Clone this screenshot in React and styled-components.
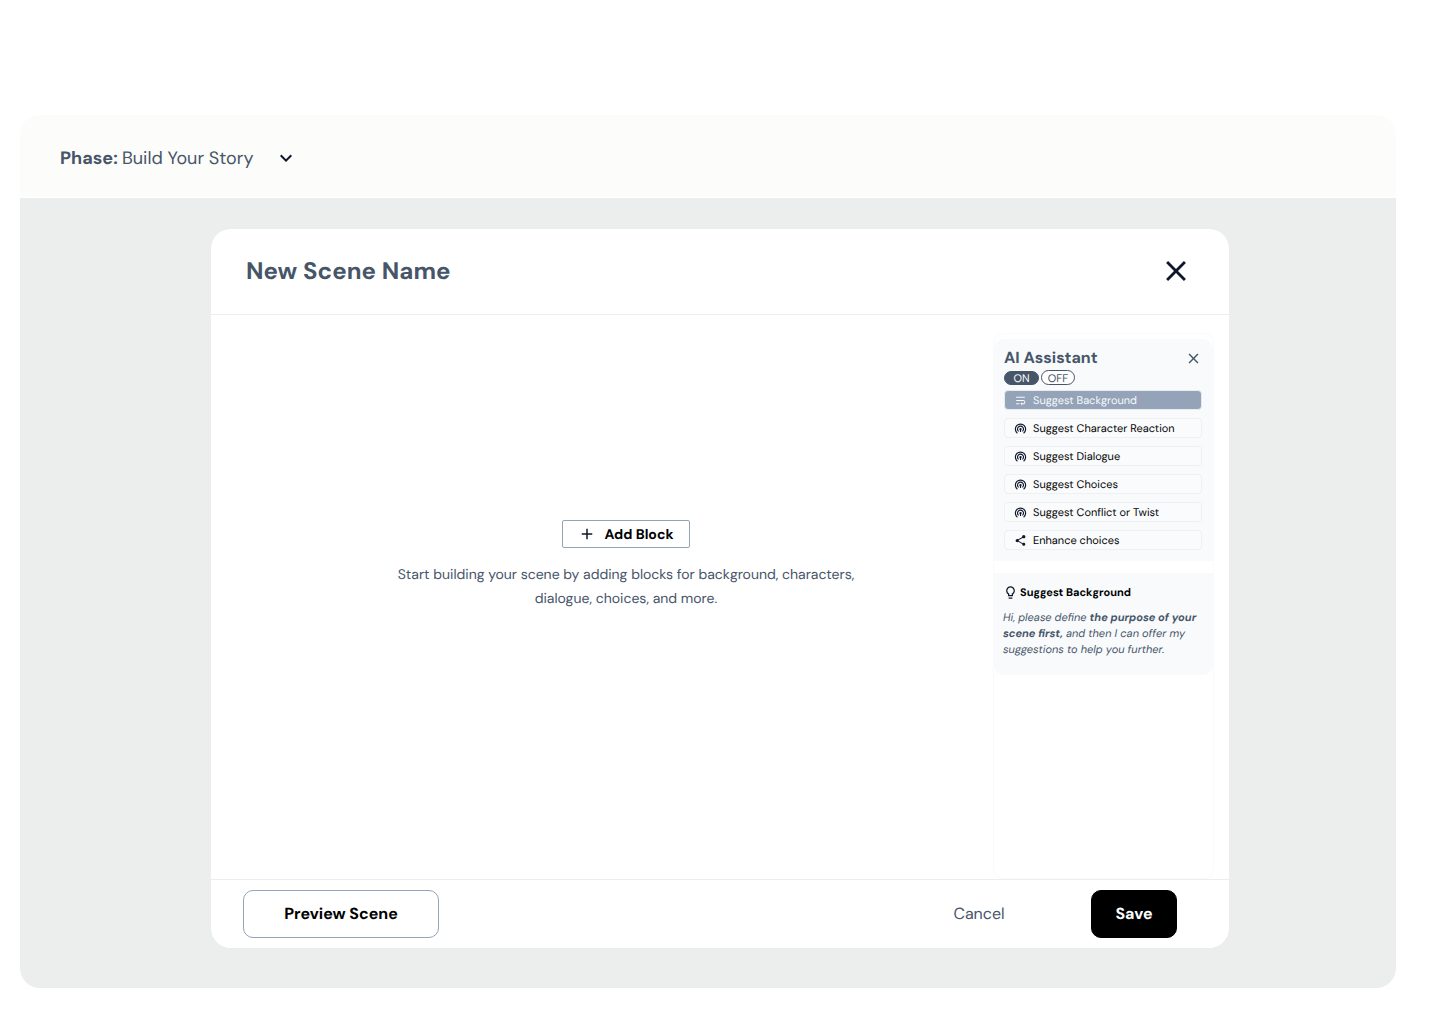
import React from "react";
import styled, { createGlobalStyle } from "styled-components";
import {
  MdAdd,
  MdClose,
  MdExpandMore,
  MdOutlineLightbulb,
  MdShare,
  MdWrapText,
} from "react-icons/md";

const GlobalStyle = createGlobalStyle`
  *, *::before, *::after { box-sizing: border-box; }
  body {
    margin: 0;
    background: #ffffff;
    font-family: "DM Sans", Inter, "Liberation Sans", sans-serif;
    color: #475569;
    text-rendering: geometricPrecision;
  }
  button { font-family: inherit; margin: 0; padding: 0; cursor: pointer; text-rendering: inherit; }
  h1, h2, h3, p { margin: 0; }
  svg { display: block; flex: none; }
`;

const Page = styled.main`
  width: 1440px;
  height: 1024px;
  padding: 115px 44px 36px 20px;
  overflow: hidden;
`;

const Workspace = styled.div`
  display: flex;
  flex-direction: column;
  height: 873px;
  border-radius: 20px;
  overflow: hidden;
`;

const PhaseBar = styled.header`
  display: flex;
  align-items: center;
  height: 83px;
  padding: 3px 40px 0;
  background: #fcfcfa;
  border-bottom: 1px solid #ffffff;
  font-size: 18px;
  line-height: 24px;
`;

const Label = styled.span`
  white-space: nowrap;
  font-weight: ${(p) => p.$weight || 400};
  padding-top: ${(p) => p.$drop || 0}px;
`;

const PhaseButton = styled.button`
  display: flex;
  margin: 0 0 0 21px;
  border: 0;
  background: none;
  color: #0f172a;
`;

const Stage = styled.div`
  flex: 1;
  display: flex;
  justify-content: center;
  padding: 31px 0 40px 24px;
  background: #ebeeed;
`;

const Dialog = styled.section`
  display: flex;
  flex-direction: column;
  width: 1018px;
  height: 719px;
  background: #ffffff;
  border-radius: 20px;
`;

const DialogHeader = styled.header`
  display: flex;
  align-items: center;
  justify-content: space-between;
  height: 86px;
  padding: 0 36px 2px 35px;
  border-bottom: 1px solid #ebeeed;
`;

const Title = styled.h1`
  padding-top: 2px;
  font-size: 24px;
  line-height: 32px;
  font-weight: 700;
  letter-spacing: 0.06px;
`;

const IconButton = styled.button`
  display: flex;
  border: 0;
  background: none;
  color: ${(p) => p.$color};
`;

const DialogBody = styled.div`
  display: flex;
  flex: 1;
  padding: 18px 15px 0 0;
`;

const Canvas = styled.div`
  flex: 1;
  display: flex;
  flex-direction: column;
  align-items: center;
  padding: 187px 0 0 48px;
`;

const AddButton = styled.button`
  display: flex;
  align-items: center;
  justify-content: center;
  gap: 8px;
  width: 128px;
  height: 28px;
  border: 1px solid #94a3b8;
  border-radius: 2px;
  background: #ffffff;
  color: #000000;
  font-size: 14px;
  line-height: 18px;
  svg { color: #0f172a; }
`;

const Hint = styled.p`
  display: flex;
  flex-direction: column;
  align-items: center;
  margin-top: 15px;
  font-size: 14px;
  line-height: 24px;
`;

const Sidebar = styled.aside`
  width: 221px;
  height: 546px;
  padding-top: 5px;
  border: 1px solid #fafafa;
  border-radius: 10px;
`;

const Assistant = styled.section`
  height: 222px;
  padding: 9px 11px 0 10px;
  background: #f8fafc;
  border-radius: 10px 10px 0 0;
`;

const AssistantHeader = styled.div`
  display: flex;
  align-items: center;
  justify-content: space-between;
  height: 20px;
`;

const AssistantTitle = styled.h2`
  font-size: 16px;
  line-height: 20px;
  font-weight: 700;
`;

const Switch = styled.div`
  display: flex;
  align-items: flex-end;
  gap: 2px;
  height: 17px;
`;

const SwitchOption = styled.button`
  display: flex;
  align-items: center;
  justify-content: center;
  width: ${(p) => (p.$active ? 35 : 34)}px;
  height: ${(p) => (p.$active ? 14 : 15)}px;
  padding-top: 2px;
  border: 1px solid #475569;
  border-radius: 8px;
  background: ${(p) => (p.$active ? "#475569" : "#ffffff")};
  color: ${(p) => (p.$active ? "#f8fafc" : "#475569")};
  font-size: 11px;
  line-height: 12px;
`;

const Suggestions = styled.div`
  display: flex;
  flex-direction: column;
  gap: 8px;
  margin-top: 5px;
`;

const Suggestion = styled.button`
  display: flex;
  align-items: center;
  gap: 6px;
  width: 198px;
  height: 20px;
  padding-left: 9px;
  border: 1px solid ${(p) => (p.$active ? "#e8ecf1" : "#eef0f2")};
  border-radius: 4px;
  background: ${(p) => (p.$active ? "#94a3b8" : "#f9fbfc")};
  color: ${(p) => (p.$active ? "#f8fafc" : "#000000")};
  font-size: 11px;
  line-height: 16px;
  svg { color: ${(p) => (p.$active ? "#f8fafc" : "#0f172a")}; }
`;

const Advice = styled.section`
  height: 102px;
  margin-top: 12px;
  padding: 11px 9px 0;
  background: #f8fafc;
  border-radius: 0 0 10px 10px;
`;

const AdviceTitle = styled.h3`
  display: flex;
  align-items: center;
  gap: 2px;
  height: 16px;
  color: #000000;
  font-size: 11px;
  line-height: 16px;
  svg { color: #0f172a; }
`;

const AdviceText = styled.p`
  display: flex;
  flex-direction: column;
  margin-top: 10px;
  font-size: 11px;
  line-height: 16px;
  font-style: italic;
`;

const DialogFooter = styled.footer`
  display: flex;
  align-items: center;
  height: 69px;
  padding: 0 52px 0 32px;
  border-top: 1px solid #ebeeed;
`;

const FooterButton = styled.button`
  display: flex;
  align-items: center;
  justify-content: center;
  width: ${(p) => p.$width}px;
  height: 48px;
  border: 1px solid ${(p) => p.$border || "transparent"};
  border-radius: 10px;
  background: ${(p) => p.$fill || "#ffffff"};
  color: ${(p) => p.$color};
  font-size: 16px;
  line-height: 24px;
`;

const FooterActions = styled.div`
  display: flex;
  gap: 52px;
  margin-left: auto;
`;

/* Two broadcast arcs, open at the bottom, around a dot on a short stem. */
function BroadcastIcon({ size }) {
  return (
    <svg width={size} height={size} viewBox="0 0 13 13" fill="none" stroke="currentColor" strokeWidth="1.15">
      <path d="M3.4 11.2A5.1 5.1 0 1 1 9.6 11.2" />
      <path d="M4.6 9.4A3 3 0 1 1 8.4 9.4" />
      <circle cx="6.5" cy="7.2" r="1.15" fill="currentColor" stroke="none" />
      <path d="M6.5 7.4V10" />
    </svg>
  );
}

const suggestions = [
  { label: "Suggest Background", Icon: MdWrapText, active: true },
  { label: "Suggest Character Reaction", Icon: BroadcastIcon },
  { label: "Suggest Dialogue", Icon: BroadcastIcon },
  { label: "Suggest Choices", Icon: BroadcastIcon },
  { label: "Suggest Conflict or Twist", Icon: BroadcastIcon },
  { label: "Enhance choices", Icon: MdShare },
];

export default function App() {
  return (
    <>
      <GlobalStyle />
      <Page>
        <Workspace>
          <PhaseBar>
            <Label $weight={700}>Phase:&nbsp;</Label>
            <Label>Build Your Story</Label>
            <PhaseButton aria-label="Change phase">
              <MdExpandMore size={24} />
            </PhaseButton>
          </PhaseBar>
          <Stage>
            <Dialog>
              <DialogHeader>
                <Title>New Scene Name</Title>
                <IconButton $color="#0f172a" aria-label="Close">
                  <MdClose size={34} />
                </IconButton>
              </DialogHeader>
              <DialogBody>
                <Canvas>
                  <AddButton>
                    <MdAdd size={18} />
                    <Label $weight={700} $drop={1}>Add Block</Label>
                  </AddButton>
                  <Hint>
                    <Label>Start building your scene by adding blocks for background, characters,</Label>
                    <Label>dialogue, choices, and more.</Label>
                  </Hint>
                </Canvas>
                <Sidebar>
                  <Assistant>
                    <AssistantHeader>
                      <AssistantTitle>AI Assistant</AssistantTitle>
                      <IconButton $color="#475569" aria-label="Close assistant">
                        <MdClose size={17} />
                      </IconButton>
                    </AssistantHeader>
                    <Switch>
                      <SwitchOption $active>ON</SwitchOption>
                      <SwitchOption>OFF</SwitchOption>
                    </Switch>
                    <Suggestions>
                      {suggestions.map(({ label, Icon, active }) => (
                        <Suggestion key={label} $active={active}>
                          <Icon size={13} />
                          <Label $drop={2}>{label}</Label>
                        </Suggestion>
                      ))}
                    </Suggestions>
                  </Assistant>
                  <Advice>
                    <AdviceTitle>
                      <MdOutlineLightbulb size={15} />
                      <Label $weight={700} $drop={2}>Suggest Background</Label>
                    </AdviceTitle>
                    <AdviceText>
                      <Label>Hi, please define <b>the purpose of your</b></Label>
                      <Label><b>scene first,</b> and then I can offer my</Label>
                      <Label>suggestions to help you further.</Label>
                    </AdviceText>
                  </Advice>
                </Sidebar>
              </DialogBody>
              <DialogFooter>
                <FooterButton $width={196} $border="#94a3b8" $color="#000000">
                  <Label $weight={700}>Preview Scene</Label>
                </FooterButton>
                <FooterActions>
                  <FooterButton $width={120} $color="#475569">
                    <Label>Cancel</Label>
                  </FooterButton>
                  <FooterButton $width={86} $fill="#000000" $border="#000000" $color="#ffffff">
                    <Label $weight={700}>Save</Label>
                  </FooterButton>
                </FooterActions>
              </DialogFooter>
            </Dialog>
          </Stage>
        </Workspace>
      </Page>
    </>
  );
}
